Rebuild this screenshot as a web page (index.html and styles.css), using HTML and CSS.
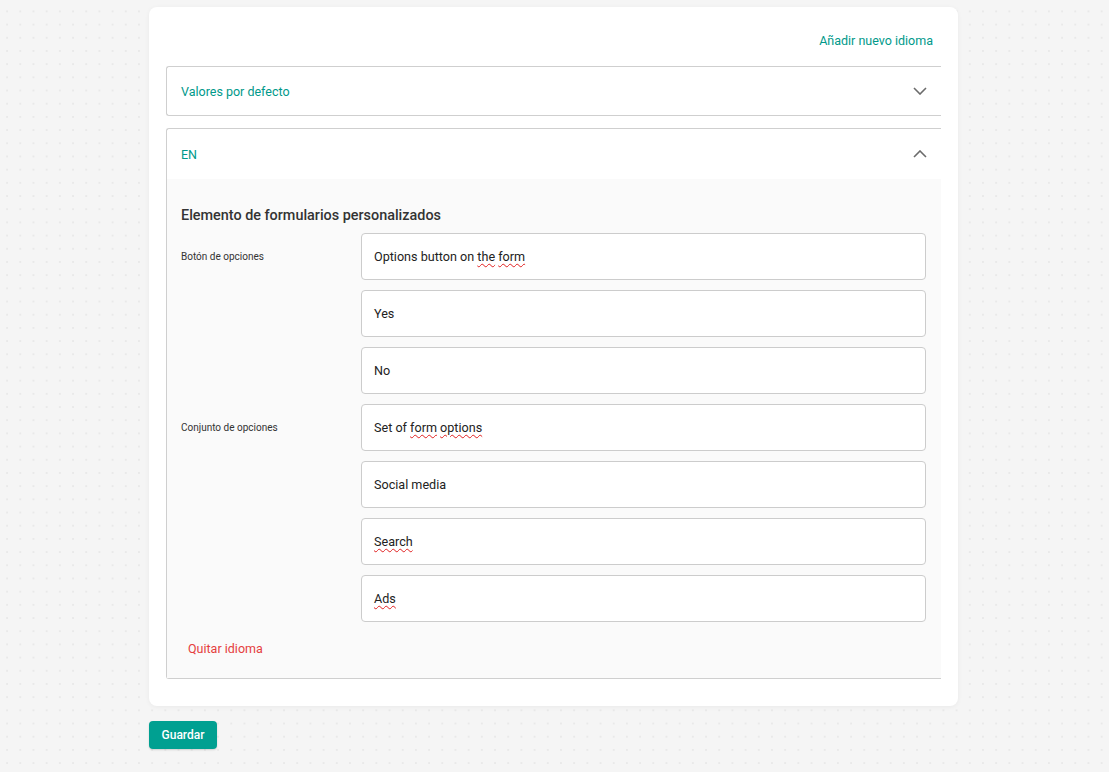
FILE: index.html
```html
<!DOCTYPE html>
<html lang="es">
<head>
<meta charset="utf-8">
<title>Idiomas</title>
<link rel="stylesheet" href="styles.css">
</head>
<body>
<main class="page">
  <section class="card">
    <div class="card-top">
      <a class="add-lang" href="#">Añadir nuevo idioma</a>
    </div>
    <div class="panel">
      <div class="panel-head">
        <span class="panel-title">Valores por defecto</span>
        <svg class="chev" width="14" height="8" viewBox="0 0 14 8"><path d="M1 1 L7 7 L13 1" fill="none" stroke="#6b6b6b" stroke-width="1.6"/></svg>
      </div>
    </div>
    <div class="panel open">
      <div class="panel-head">
        <span class="panel-title">EN</span>
        <svg class="chev" width="14" height="8" viewBox="0 0 14 8"><path d="M1 7 L7 1 L13 7" fill="none" stroke="#6b6b6b" stroke-width="1.6"/></svg>
      </div>
      <div class="panel-body">
        <h2 class="section-title">Elemento de formularios personalizados</h2>
        <div class="field-row">
          <div class="field-label">Botón de opciones</div>
          <div class="field-inputs">
            <div class="text-input">Options button on <span class="sp">the</span> <span class="sp">form</span></div>
            <div class="text-input">Yes</div>
            <div class="text-input">No</div>
          </div>
        </div>
        <div class="field-row">
          <div class="field-label">Conjunto de opciones</div>
          <div class="field-inputs">
            <div class="text-input">Set of <span class="sp">form</span> <span class="sp">options</span></div>
            <div class="text-input">Social media</div>
            <div class="text-input"><span class="sp">Search</span></div>
            <div class="text-input"><span class="sp">Ads</span></div>
          </div>
        </div>
        <a class="remove-lang" href="#">Quitar idioma</a>
      </div>
    </div>
  </section>
  <div class="actions">
    <button class="btn-save" type="button">Guardar</button>
  </div>
</main>
</body>
</html>
```
FILE: styles.css
```css
html, body {
  margin: 0;
  padding: 0;
}
body {
  font-family: Roboto, "Liberation Sans", Arial, sans-serif;
  color: #222;
  background-color: #f5f5f5;
  background-image: radial-gradient(circle, #e9e9e9 1px, transparent 1.4px);
  background-size: 13.2px 13.2px;
  background-position: 0.5px 4.8px;
  min-height: 772px;
}
.page {
  padding: 7px 0 20px 149px;
  width: 809px;
}
.card {
  background: #fff;
  border-radius: 8px;
  box-shadow: 0 1px 5px rgba(0, 0, 0, 0.05);
  padding: 25px 17px 27px 17px;
}
.card-top {
  display: flex;
  justify-content: flex-end;
  padding-right: 8px;
  margin-bottom: 16px;
}
.add-lang {
  color: #00998a;
  font-size: 12.5px;
  line-height: 18px;
  text-decoration: none;
}
.panel {
  border: 1px solid #cfcfcf;
  border-right: none;
  border-radius: 3px 0 0 3px;
  margin-bottom: 12px;
}
.panel:last-child {
  margin-bottom: 0;
}
.panel-head {
  display: flex;
  align-items: center;
  justify-content: space-between;
  height: 48px;
  padding: 0 14px 0 14px;
}
.panel.open .panel-head {
  height: 50px;
}
.panel-title {
  color: #00998a;
  font-size: 12.5px;
}
.chev {
  display: block;
}
.panel-body {
  background: #fafafa;
  padding: 27px 15px 20px 14px;
}
.section-title {
  margin: 0 0 7px 0;
  font-size: 14.4px;
  line-height: 20px;
  font-weight: 500;
  color: #333;
}
.field-row {
  display: flex;
  margin-bottom: 10px;
}
.field-label {
  width: 180px;
  flex: none;
  font-size: 10px;
  color: #333;
  height: 47px;
  display: flex;
  align-items: center;
}
.field-inputs {
  flex: 1;
  display: flex;
  flex-direction: column;
  gap: 10px;
}
.text-input {
  height: 45px;
  line-height: 45px;
  border: 1px solid #cccccc;
  border-radius: 4px;
  background: #fff;
  padding: 0 12px;
  font-size: 12.6px;
  color: #222;
  white-space: nowrap;
}
.sp {
  text-decoration: underline wavy #e02020;
  text-decoration-thickness: 1px;
  text-underline-offset: 2px;
}
.remove-lang {
  display: inline-block;
  margin: 8px 0 0 7px;
  color: #e53e3e;
  font-size: 12.5px;
  line-height: 18px;
  text-decoration: none;
}
.actions {
  margin-top: 15px;
}
.btn-save {
  width: 68px;
  height: 28px;
  border: none;
  border-radius: 4px;
  background: #00a091;
  color: #fff;
  font-family: Roboto, "Liberation Sans", Arial, sans-serif;
  font-size: 12px;
  font-weight: 500;
  padding: 0;
  box-shadow: 0 1px 2px rgba(0, 0, 0, 0.15);
}
```
